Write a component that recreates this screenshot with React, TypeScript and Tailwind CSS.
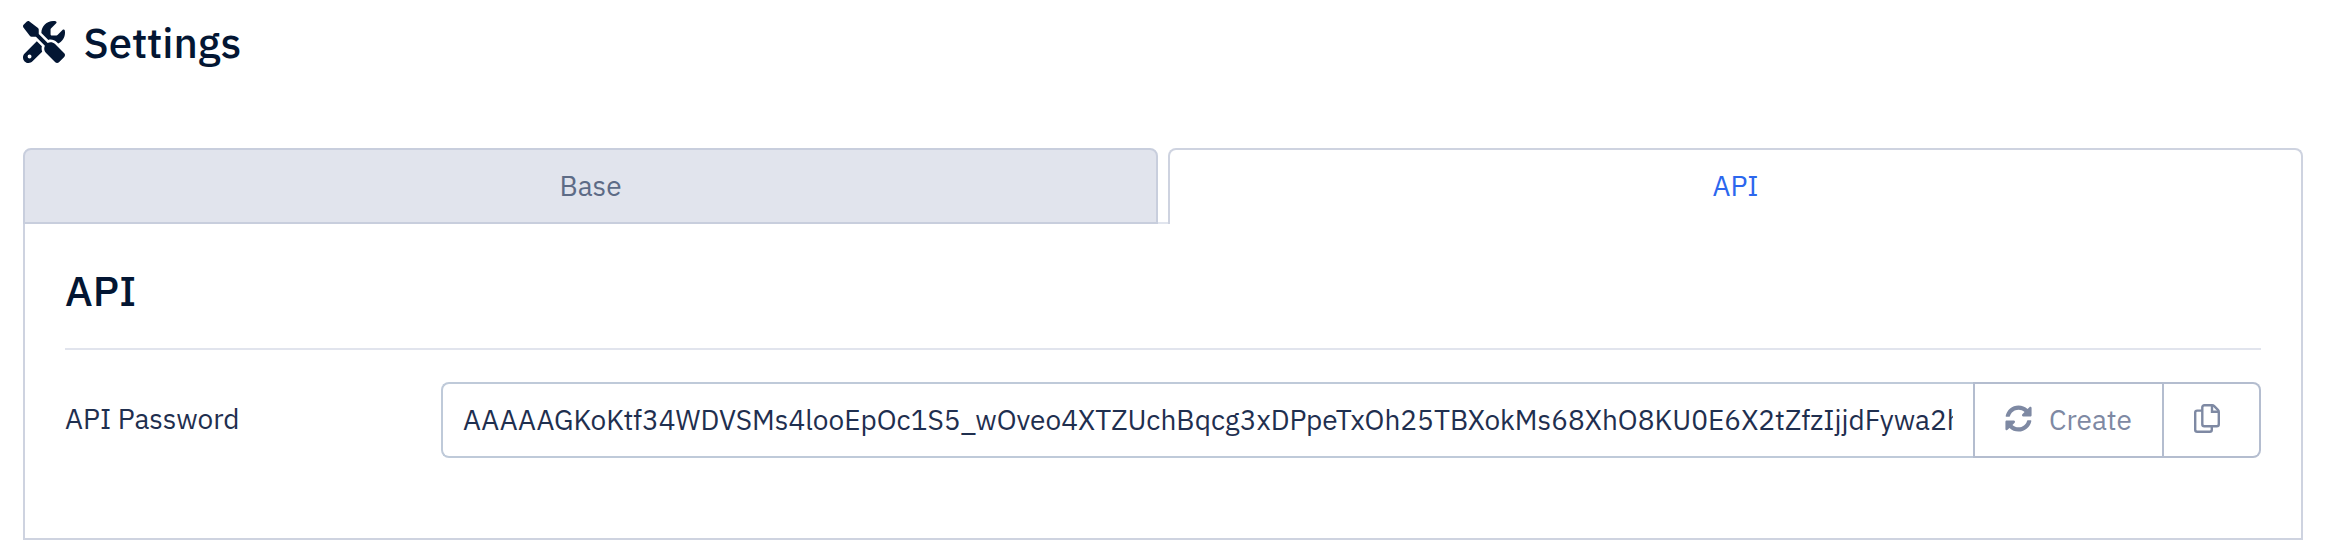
import { FaScrewdriverWrench } from "react-icons/fa6";
import { FaSyncAlt } from "react-icons/fa";

const password =
  "AAAAAGKoKtf34WDVSMs4looEpOc1S5_wOveo4XTZUchBqcg3xDPpeTxOh25TBXokMs68XhO8KU0E6X2tZfzIjjdFywa2h";

function CopyIcon() {
  return (
    <svg className="mb-[3px] h-[29px] w-[26px]" viewBox="0 0 26 29" fill="none" stroke="currentColor" strokeWidth="2.4">
      <path d="M8.2 6.6H3.2a2 2 0 0 0-2 2v17.2a2 2 0 0 0 2 2h12.6a2 2 0 0 0 2-2v-3.4" />
      <path d="M10.3 1.2h7.8a3 3 0 0 1 2.1.9l3.7 3.7a3 3 0 0 1 .9 2.1v12.3a2 2 0 0 1-2 2H10.3a2 2 0 0 1-2-2V3.2a2 2 0 0 1 2-2Z" />
      <path d="M18 1.5v6.3h6.4" />
    </svg>
  );
}

export default function App() {
  return (
    <div className="h-[558px] bg-white px-[23px] pt-[21px] font-['IBM_Plex_Sans','Open_Sans',sans-serif] text-[28px] text-[#1f2f4f]">
      <header className="flex h-[42px] items-center text-[42px] font-medium text-[#031633]">
        <FaScrewdriverWrench className="size-[42px]" />
        <h1 className="ml-[18.5px] pt-0.5 leading-[42px]">Settings</h1>
      </header>

      <nav className="mt-[85px] flex h-[76px] leading-[72px]">
        <button className="w-[1135px] rounded-t-lg border-2 border-[#c8cedd] bg-[#e1e4ed] text-center text-[#5d6b86]">
          Base
        </button>
        <span className="w-[10px] border-b-2 border-[#e1e5ee]" />
        <button className="w-[1135px] rounded-t-lg border-2 border-b-0 border-[#ced3e0] pb-0.5 text-center text-[#2c67ee]">
          API
        </button>
      </nav>

      <main className="h-[316px] border-2 border-t-0 border-[#ced3e0] px-10">
        <h2 className="h-[126px] border-b-2 border-[#e1e4ed] pt-[40px] text-[42px] font-medium leading-[54px] text-[#031633]">
          API
        </h2>
        <div className="mt-8 flex h-[76px]">
          <label className="w-[376px] leading-[74px]">API Password</label>
          <div className="w-[1532px] rounded-l-lg border-2 border-r-0 border-[#bfcad9] pl-5 pr-5">
            <div className="overflow-hidden whitespace-nowrap leading-[72px]">{password}</div>
          </div>
          <button className="flex w-[191px] items-center border-2 border-[#b4bdcf] pl-[30px] text-[#7e89a3]">
            <FaSyncAlt className="mb-[3px] size-[27px]" />
            <span className="ml-[17px] leading-[72px]">Create</span>
          </button>
          <button className="flex w-[97px] items-center rounded-r-lg border-2 border-l-0 border-[#b4bdcf] pl-[30px] text-[#7e89a3]">
            <CopyIcon />
          </button>
        </div>
      </main>
    </div>
  );
}
